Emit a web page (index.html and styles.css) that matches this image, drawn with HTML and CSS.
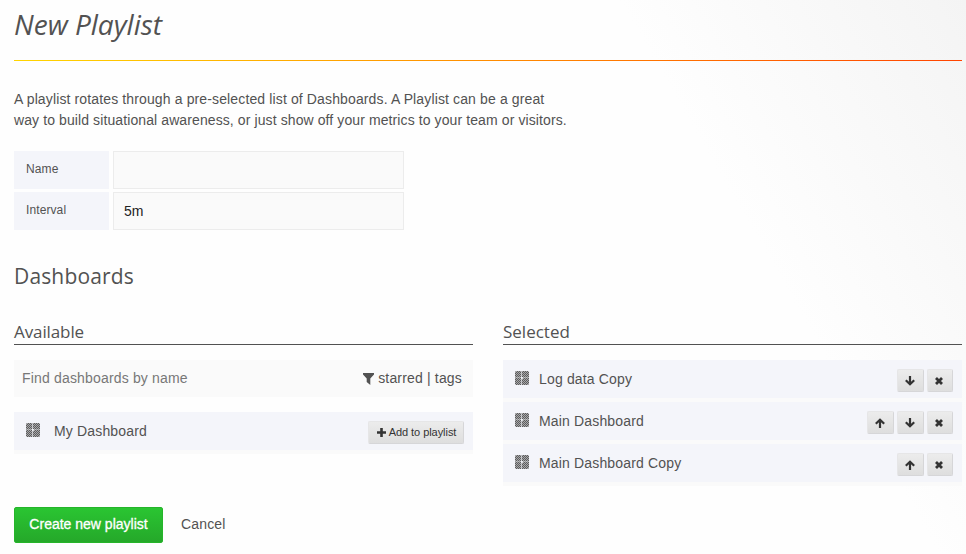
FILE: index.html
```html
<!DOCTYPE html>
<html lang="en">
<head>
<meta charset="utf-8">
<title>New Playlist</title>
<link rel="stylesheet" href="styles.css">
</head>
<body>
<svg class="defs" aria-hidden="true">
  <defs>
    <pattern id="check" width="2" height="2" patternUnits="userSpaceOnUse">
      <rect width="2" height="2" fill="#a8a8aa"/>
      <path d="M0 0h1v1H0zM1 1h1v1H1z" fill="#5c5c5c"/>
    </pattern>
    <symbol id="grid" viewBox="0 0 14 14">
      <path fill="url(#check)" d="M1 0h12l1 1v12l-1 1H1l-1-1V1z"/>
      <path fill="#f4f5fa" fill-opacity=".6" d="M6 0h1v14H6z"/>
      <path fill="#f4f5fa" fill-opacity=".35" d="M0 6h14v1H0z"/>
      <path fill="#f4f5fa" fill-opacity=".75" d="M6 6h2v2H6z"/>
    </symbol>
    <symbol id="down" viewBox="0 0 10 10">
      <path d="M5 0v8M.8 4.300L5 8.300l4.200-4" fill="none" stroke="currentColor" stroke-width="2.200"/>
    </symbol>
    <symbol id="up" viewBox="0 0 10 10">
      <path d="M5 10V2M.8 5.700L5 1.700l4.200 4" fill="none" stroke="currentColor" stroke-width="2.200"/>
    </symbol>
    <symbol id="remove" viewBox="0 0 10 10">
      <path d="M2 2l6 6M8 2L2 8" fill="none" stroke="currentColor" stroke-width="2.800"/>
    </symbol>
  </defs>
</svg>
<main class="page">
  <h1 class="title">New Playlist</h1>
  <p class="intro"><span class="line-a">A playlist rotates through a pre-selected list of Dashboards. A Playlist can be a great</span><br><span class="line-b">way to build situational awareness, or just show off your metrics to your team or visitors.</span></p>
  <form class="fields">
    <label class="label" for="name">Name</label><input class="input" id="name" type="text">
    <label class="label" for="interval">Interval</label><input class="input" id="interval" type="text" value="5m">
  </form>
  <h2 class="section">Dashboards</h2>
  <div class="columns">
    <section>
      <h3 class="heading available-heading">Available</h3>
      <div class="search">
        <span class="placeholder">Find dashboards by name</span>
        <span class="filters"><svg class="funnel" viewBox="0 0 11 12"><path fill="currentColor" d="M0 0h11v1.500L7.300 5.500V12L3.700 9V5.500L0 1.500z"/></svg><span>starred | tags</span></span>
      </div>
      <div class="row available">
        <svg class="grid"><use href="#grid"/></svg><span class="name">My Dashboard</span>
        <button class="btn add" type="button"><svg class="plus" viewBox="0 0 9 9"><path d="M4.500 0v9M0 4.500h9" stroke="currentColor" stroke-width="2.600"/></svg>Add to playlist</button>
      </div>
    </section>
    <section>
      <h3 class="heading">Selected</h3>
      <div class="row">
        <svg class="grid"><use href="#grid"/></svg><span class="name">Log data Copy</span>
        <button class="btn" type="button"><svg class="ico"><use href="#down"/></svg></button>
        <button class="btn last" type="button"><svg class="ico"><use href="#remove"/></svg></button>
      </div>
      <div class="row">
        <svg class="grid"><use href="#grid"/></svg><span class="name">Main Dashboard</span>
        <button class="btn" type="button"><svg class="ico"><use href="#up"/></svg></button>
        <button class="btn" type="button"><svg class="ico"><use href="#down"/></svg></button>
        <button class="btn last" type="button"><svg class="ico"><use href="#remove"/></svg></button>
      </div>
      <div class="row">
        <svg class="grid"><use href="#grid"/></svg><span class="name">Main Dashboard Copy</span>
        <button class="btn" type="button"><svg class="ico"><use href="#up"/></svg></button>
        <button class="btn last" type="button"><svg class="ico"><use href="#remove"/></svg></button>
      </div>
    </section>
  </div>
  <div class="actions">
    <button class="create" type="button">Create new playlist</button>
    <a class="cancel">Cancel</a>
  </div>
</main>
</body>
</html>
```
FILE: styles.css
```css
* { box-sizing: border-box; }
html { background: #fefefe; }
body {
  margin: 0;
  height: 554px;
  overflow: hidden;
  color: #525252;
  font: 14px/21px "Liberation Sans", Arial, sans-serif;
  background: linear-gradient(60deg, #fefefe 73%, #f4f4f4 100%);
}
.defs { position: absolute; width: 0; height: 0; }
.page { padding: 0 4px 0 14px; }
h1, h2, h3, p { margin: 0; font-weight: 400; }
.title {
  height: 61px;
  padding-top: 4px;
  font: italic 28px/40px "Open Sans", sans-serif;
  border-bottom: 1px solid;
  border-image: linear-gradient(90deg, #ffd500, #ff4400) 1;
}
.intro { padding-top: 28px; white-space: nowrap; }
.line-a { letter-spacing: .13px; }
.line-b { letter-spacing: .1px; }
.fields {
  display: grid;
  grid-template-columns: 95px 291px;
  grid-auto-rows: 38px;
  gap: 3px 4px;
  margin-top: 20px;
}
.label { padding: 8px 12px; font-size: 12px; background: #f4f5fa; letter-spacing: .1px; }
.input {
  padding: 1px 10px;
  font: 14px "Liberation Sans", Arial, sans-serif;
  color: #222;
  background: #fafafa;
  border: 1px solid #ececec;
  border-radius: 0;
  outline: 0;
}
.section { margin-top: 31px; font: 21px/30px "Open Sans", sans-serif; letter-spacing: .15px; }
.columns { display: grid; grid-template-columns: 459px 459px; gap: 30px; margin-top: 29px; }
.heading {
  height: 25px;
  margin-bottom: 15px;
  font: 17px/24px "Open Sans", sans-serif;
  border-bottom: 1px solid #525252;
}
.available-heading { letter-spacing: -.1px; }
.search {
  display: flex;
  align-items: center;
  justify-content: space-between;
  height: 37px;
  margin-bottom: 15px;
  padding: 0 11px 0 8px;
  background: #fafafa;
}
.placeholder { color: #777; letter-spacing: .17px; }
.filters { display: flex; align-items: center; gap: 4px; letter-spacing: .17px; }
.funnel { width: 11px; height: 12px; }
.row {
  display: flex;
  height: 42px;
  padding: 9px 9px 0 12px;
  background: #f4f5fa;
  border-bottom: 4px solid #fafafa;
}
.grid { width: 14px; height: 14px; margin: 2px 10px 0 0; }
.name { margin-right: auto; letter-spacing: .16px; }
.available .grid { margin-right: 14px; }
.btn {
  display: flex;
  align-items: center;
  justify-content: center;
  width: 27px;
  height: 23px;
  margin-left: 3px;
  padding: 0 1px 0 0;
  color: #333;
  border: 1px solid #e6e6e7;
  border-right-color: #d6d6d8;
  border-bottom-color: #d6d6d8;
  border-radius: 2px;
  background: linear-gradient(#ececec, #dedede);
}
.last { width: 26px; padding-right: 2px; }
.ico { width: 10px; height: 10px; }
.add {
  width: 96px;
  gap: 3px;
  padding: 0 0 1px 1px;
  font: 11px "Liberation Sans", Arial, sans-serif;
  letter-spacing: -.05px;
}
.plus { width: 9px; height: 9px; }
.actions { display: flex; align-items: center; margin-top: 21px; height: 36px; }
.create {
  width: 149px;
  height: 36px;
  margin-right: 18px;
  padding: 0 0 2px;
  color: #fff;
  font: 14px "Liberation Sans", Arial, sans-serif;
  -webkit-text-stroke: .3px #fff;
  border: 1px solid #25b52a;
  border-radius: 2px;
  background: linear-gradient(#2ac532, #25a82a);
}
.cancel { padding-bottom: 1px; letter-spacing: .15px; }
```
